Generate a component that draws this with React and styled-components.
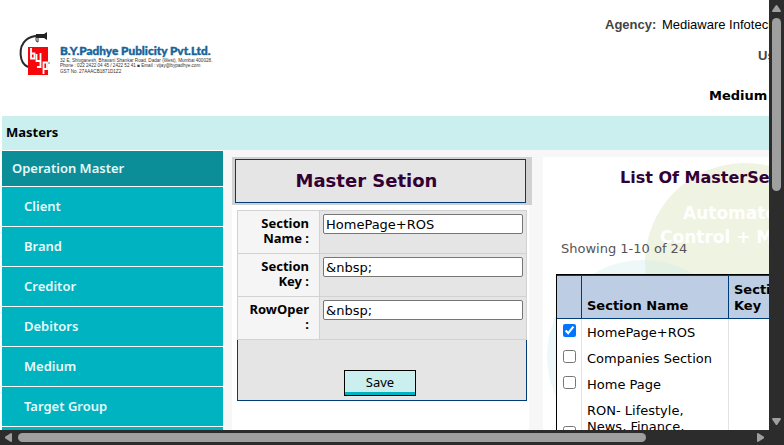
import React from "react";
import styled, { createGlobalStyle } from "styled-components";

const GlobalStyle = createGlobalStyle`
  * { box-sizing: border-box; }
  body { margin: 0; background: #fff; color: #000; font: 13px "DejaVu Sans", Verdana, sans-serif; }
  button, input { font: inherit; color: inherit; }
`;

const sans = `"Noto Sans", "DejaVu Sans", sans-serif`;
const wide = `"DejaVu Sans", Verdana, sans-serif`;

const Frame = styled.div`
  display: grid;
  grid-template: minmax(0, 1fr) 15px / minmax(0, 1fr) 15px;
  height: 100vh;
  background: #2c2c2c;
`;
const Viewport = styled.div`
  overflow: hidden;
  background: #fff;
`;
const Page = styled.div`
  min-width: 900px;
  padding-left: 2px;
`;
const Header = styled.header`
  display: flex;
  justify-content: space-between;
  height: 116px;
`;
const Logo = styled.svg`
  width: 220px;
  height: 60px;
  margin: 26px 0 0 14px;
`;
const Account = styled.div`
  display: grid;
  grid-template-rows: 31px 40px 16px;
  align-content: start;
  width: 295px;
  padding-top: 17px;
  white-space: nowrap;
  font: 13px/16px "Liberation Sans", Arial, sans-serif;
`;
const Caption = styled.b`
  margin-right: 2px;
  color: #444;
`;
const UserLine = styled.div`
  padding-left: 153px;
`;
const MediumLine = styled.div`
  padding-left: 104px;
  font: bold 13px/16px ${wide};
`;
const MastersBar = styled.div`
  height: 34px;
  padding-left: 4px;
  background: #cbefef;
  font: bold 13px/33px ${sans};
`;
const Body = styled.div`
  display: grid;
  grid-template-columns: 221px 297px minmax(0, 1fr);
  background: #f7f7f7;
`;
const Menu = styled.nav`
  display: grid;
  align-content: start;
  row-gap: 1px;
  padding-top: 1px;
  background: #fff;
`;
const MenuTitle = styled.div`
  padding-left: 10px;
  color: #e8f8f8;
  background: #0c8e98;
  font: 600 13px/35px ${sans};
`;
const MenuLink = styled.a`
  padding-left: 22px;
  color: #e8fbfc;
  background: #00b3c0;
  font: 600 13px/39px ${sans};
  text-decoration: none;
`;
const FormPanel = styled.form`
  margin: 7px 0 0 9px;
  width: 297px;
  background: #fff;
`;
const TitleStrip = styled.div`
  width: 300px;
  padding: 2px 6px 2px 3px;
  background: #d1d1d1;
`;
const FormTitle = styled.h1`
  margin: 0;
  padding-right: 28px;
  border: 1px solid #003c78;
  background: #e5e5e5;
  color: #330033;
  font: bold 18px/42px ${wide};
  text-align: center;
`;
const Fields = styled.div`
  width: 290px;
  margin: 5px 0 0 5px;
  border: 1px solid #d2d2d2;
  border-bottom: 0;
`;
const Field = styled.div`
  display: grid;
  grid-template-columns: 82px 1fr;
  height: 43px;
  border-bottom: 1px solid #d2d2d2;
  background: #e5e5e5;
`;
const FieldLabel = styled.label`
  padding: 5px 10px 0 8px;
  border-right: 1px solid #d2d2d2;
  background: #f5f5f5;
  font: bold 13px/15px ${sans};
  text-align: right;
`;
const TextBox = styled.input`
  width: 200px;
  height: 20px;
  margin: 3px 0 0 3px;
  padding: 0 2px;
  border: 1px solid #767676;
  border-radius: 2px;
  background: #fff;
`;
const Actions = styled.div`
  display: flex;
  justify-content: center;
  width: 290px;
  height: 61px;
  margin-left: 5px;
  padding: 30px 4px 0 0;
  border: solid #003c78;
  border-width: 0 1px 1px;
  background: #e5e5e5;
`;
const SaveButton = styled.button`
  width: 72px;
  height: 26px;
  padding: 0 0 2px;
  border: 1px solid #000;
  background: #cbefef;
  box-shadow: inset 0 -3px #00b3c0;
  font-family: ${sans};
`;
const ListPanel = styled.section`
  position: relative;
  height: 420px;
  margin: 7px 0 0 23px;
  background: #fff;
`;
const Watermark = styled.svg`
  position: absolute;
  top: 0;
  left: 0;
  width: 340px;
  height: 320px;
`;
const ListContent = styled.div`
  position: relative;
  padding: 9px 0 0 13px;
`;
const ListTitle = styled.h2`
  margin: 0;
  padding-left: 64px;
  color: #330033;
  font: bold 16px/24px ${wide};
`;
const Showing = styled.p`
  margin: 50px 0 17px 5px;
  color: #555;
  font-size: 13px;
  line-height: 17px;
`;
const Table = styled.table`
  width: 300px;
  table-layout: fixed;
  border-collapse: separate;
  border-spacing: 0;
  border: 1px solid #000;
  background: #fff;
`;
const Col = styled.col`
  width: ${({ $w }) => $w}px;
`;
const HeadCell = styled.th`
  height: 44px;
  padding: 6px 5px 4px;
  border: solid #003c78;
  border-width: 1px 1px 1px 0;
  background: #bdcde4;
  font-weight: bold;
  line-height: 16px;
  text-align: left;
  vertical-align: bottom;
`;
const Cell = styled.td`
  padding: 6px 5px 4px;
  border-right: 1px solid #e3e3e3;
  line-height: 16px;
`;
const TickCell = styled(Cell)`
  padding: 5px;
`;
const Tick = styled.input`
  display: block;
  width: 13px;
  height: 13px;
  margin: 0 0 3px 1px;
`;
const Track = styled.div`
  display: flex;
  flex-direction: ${({ $vertical }) => ($vertical ? "column" : "row")};
  align-items: center;
  justify-content: space-between;
  padding: ${({ $vertical }) => ($vertical ? "4px 0" : "0 4px")};
`;
const Thumb = styled.div`
  flex: 0 0 ${({ $share }) => $share}%;
  width: ${({ $vertical }) => ($vertical ? "9px" : "auto")};
  height: ${({ $vertical }) => ($vertical ? "auto" : "9px")};
  margin: ${({ $vertical }) => ($vertical ? "5px 0 auto" : "0 auto 0 5px")};
  border-radius: 5px;
  background: #9f9f9f;
`;
const Arrow = styled.svg`
  flex: none;
  width: 9px;
  height: 9px;
  fill: #9f9f9f;
`;

const arrows = {
  up: "M3.6 1.4 Q4.5 0.4 5.4 1.4 L9 7 Q9 8 8 8 H1 Q0 8 0 7 Z",
  down: "M3.6 7.6 Q4.5 8.6 5.4 7.6 L9 2 Q9 1 8 1 H1 Q0 1 0 2 Z",
  left: "M1.4 3.6 Q0.4 4.5 1.4 5.4 L7 9 Q8 9 8 8 V1 Q8 0 7 0 Z",
  right: "M7.6 3.6 Q8.6 4.5 7.6 5.4 L2 9 Q1 9 1 8 V1 Q1 0 2 0 Z",
};

function ArrowIcon({ dir }) {
  return (
    <Arrow viewBox="0 0 9 9" aria-hidden="true">
      <path d={arrows[dir]} />
    </Arrow>
  );
}

function Brand() {
  return (
    <Logo viewBox="0 0 220 60" role="img" aria-label="B.Y.Padhye Publicity Pvt.Ltd.">
      <rect x="12" y="21" width="20" height="28" fill="#f5070c" />
      <path d="M12 41 C3 37 2 21 10 14 C15 9 22 10 29 9" fill="none" stroke="#2a2a2a" strokeWidth="2" />
      <path d="M20 8 H28 L31 6 V14 L28 12 H20 Z" fill="#222" />
      <path d="M20 11 V14 Q20 16 22 16 V12" stroke="#333" strokeWidth="1" fill="none" />
      <g fill="none" stroke="#fff" strokeWidth="1.8">
        <path d="M15 22 V32.5 H18.5 V27.5 H15" />
        <path d="M20.5 28 V35 H24 M24.5 27 V41 H21" />
        <path d="M27.5 48 V36.5 H31 V43 H27.5" />
      </g>
      <path d="M32 37 H34" stroke="#777" fill="none" />
      <svg x="44" y="15" width="176" height="40" viewBox="0 0 880 200">
        <text x="0" y="71" fill="#17649a" stroke="#17649a" strokeWidth="2" fontFamily="Lato, sans-serif" fontWeight="900" fontSize="59">
          B.Y.Padhye Publicity Pvt.Ltd.
        </text>
        <g fill="#333" fontFamily="Liberation Sans, sans-serif" fontSize="23">
          <text x="0" y="106">32 E, Shivganesh, Bhavani Shankar Road, Dadar (West), Mumbai 400028.</text>
          <text x="0" y="132">Phone : 022 2422 04 45 / 2422 52 41 ■ Email : vijay@bypadhye.com</text>
          <text x="0" y="158">GST No. 27AAACB1871D1Z2</text>
        </g>
      </svg>
    </Logo>
  );
}

const menu = ["Client", "Brand", "Creditor", "Debitors", "Medium", "Target Group"];
const fields = [
  ["name", "Section Name :", "HomePage+ROS"],
  ["key", "Section Key :", "\u0026nbsp;"],
  ["oper", "RowOper :", "\u0026nbsp;"],
];
const rows = [
  "HomePage+ROS",
  "Companies Section",
  "Home Page",
  "RON- Lifestyle, News, Finance, Entertainment, Sports",
];

export default function App() {
  return (
    <>
      <GlobalStyle />
      <Frame>
        <Viewport>
          <Page>
            <Header>
              <Brand />
              <Account>
                <div><Caption>Agency:</Caption> Mediaware Infotech</div>
                <UserLine><Caption>User:</Caption></UserLine>
                <MediumLine>Medium</MediumLine>
              </Account>
            </Header>
            <MastersBar>Masters</MastersBar>
            <Body>
              <Menu>
                <MenuTitle>Operation Master</MenuTitle>
                {menu.map((m) => <MenuLink key={m} href="#">{m}</MenuLink>)}
                <MenuLink href="#" aria-label="More">&nbsp;</MenuLink>
              </Menu>
              <FormPanel onSubmit={(e) => e.preventDefault()}>
                <TitleStrip><FormTitle>Master Setion</FormTitle></TitleStrip>
                <Fields>
                  {fields.map(([id, label, value]) => (
                    <Field key={id}>
                      <FieldLabel htmlFor={id}>{label}</FieldLabel>
                      <TextBox id={id} defaultValue={value} />
                    </Field>
                  ))}
                </Fields>
                <Actions><SaveButton type="submit">Save</SaveButton></Actions>
              </FormPanel>
              <ListPanel>
                <Watermark viewBox="0 0 340 320" aria-hidden="true">
                  <circle cx="202" cy="106" r="100" fill="#eff3e1" />
                  <circle cx="100" cy="199" r="96" fill="#cdebeb" fillOpacity="0.35" />
                  <g fill="#fff" fontFamily="DejaVu Sans, sans-serif" fontWeight="bold" fontSize="17">
                    <text x="140" y="62">Automated</text>
                    <text x="117" y="86">Control + More</text>
                  </g>
                </Watermark>
                <ListContent>
                  <ListTitle>List Of MasterSection</ListTitle>
                  <Showing>Showing 1-10 of 24</Showing>
                  <Table>
                    <colgroup><Col $w={25} /><Col $w={147} /><Col $w={126} /></colgroup>
                    <thead>
                      <tr>
                        <HeadCell aria-label="Select" />
                        <HeadCell>Section Name</HeadCell>
                        <HeadCell>Section<br />Key</HeadCell>
                      </tr>
                    </thead>
                    <tbody>
                      {rows.map((r, i) => (
                        <tr key={r}>
                          <TickCell><Tick type="checkbox" defaultChecked={i === 0} aria-label={r} /></TickCell>
                          <Cell>{r}</Cell>
                          <Cell />
                        </tr>
                      ))}
                    </tbody>
                  </Table>
                </ListContent>
              </ListPanel>
            </Body>
          </Page>
        </Viewport>
        <Track $vertical>
          <ArrowIcon dir="up" />
          <Thumb $vertical $share={41} />
          <ArrowIcon dir="down" />
        </Track>
        <Track>
          <ArrowIcon dir="left" />
          <Thumb $share={82.5} />
          <ArrowIcon dir="right" />
        </Track>
      </Frame>
    </>
  );
}
